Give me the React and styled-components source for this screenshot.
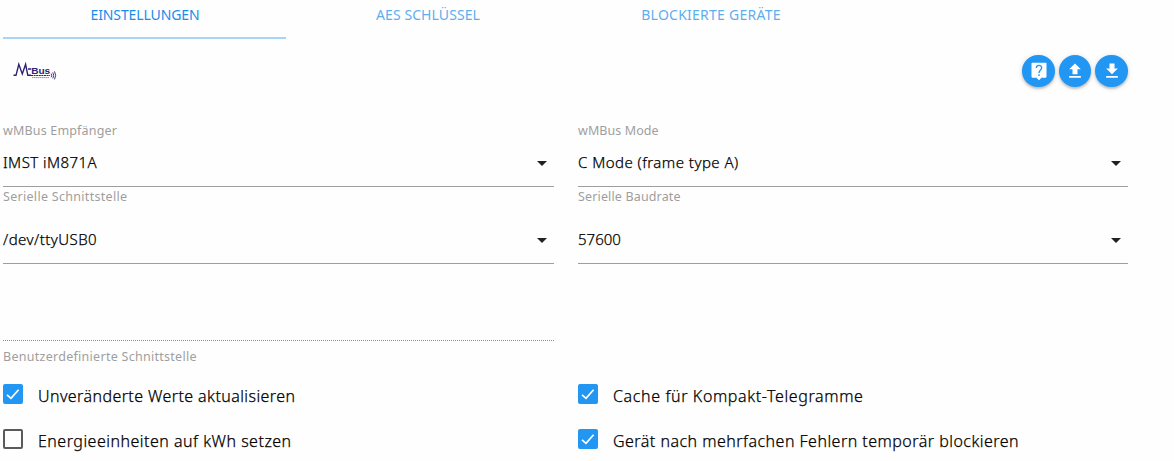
import React from "react";
import styled, { createGlobalStyle } from "styled-components";

const GlobalStyle = createGlobalStyle`
  * {
    box-sizing: border-box;
  }

  body {
    margin: 0;
    overflow: hidden;
    background: #fefefe;
    color: #000;
    font-family: "Noto Sans", "Open Sans", sans-serif;
  }
`;

const Page = styled.main`
  width: 1131px;
  height: 461px;
  padding: 0 3px;
`;

const Tabs = styled.nav`
  display: flex;
  height: 39px;
`;

const Tab = styled.a`
  width: 283px;
  padding: 5px 0 0 1px;
  border-bottom: 2px solid ${(props) => (props.$active ? "#a6d5fa" : "transparent")};
  color: ${(props) => (props.$active ? "#1a8cec" : "#5eaeee")};
  font-size: 14px;
  line-height: 20px;
  letter-spacing: ${(props) => props.$spacing || 0}px;
  text-align: center;
  text-transform: uppercase;
`;

const Header = styled.header`
  display: flex;
  justify-content: space-between;
  align-items: center;
  height: 64px;
  padding-left: 10px;
`;

const Logo = styled.svg`
  display: block;
  width: 44px;
  height: 18px;
`;

const Actions = styled.div`
  display: flex;
  gap: 4px;
`;

const RoundButton = styled.button`
  display: flex;
  align-items: center;
  justify-content: center;
  width: 32.6px;
  height: 32.6px;
  padding: 0;
  border: 0;
  border-radius: 50%;
  background: #2196f3;
  box-shadow: 0 2px 2px rgba(0, 0, 0, 0.16), 0 1px 5px rgba(0, 0, 0, 0.16);

  svg {
    width: 20px;
    height: 20px;
    fill: #fff;
  }
`;

const Columns = styled.div`
  display: grid;
  grid-template-columns: 551px 550px;
  column-gap: 24px;
`;

const Field = styled.div`
  height: ${(props) => props.$height}px;
  display: flex;
  flex-direction: column;
  justify-content: flex-end;
  gap: ${(props) => props.$gap}px;
  border-bottom: 1px solid #9e9e9e;
`;

const Label = styled.label`
  color: #9e9e9e;
  font-size: 12.5px;
  line-height: 18px;
  letter-spacing: ${(props) => props.$spacing || 0}px;
  white-space: nowrap;
`;

const Value = styled.div`
  display: flex;
  align-items: center;
  justify-content: space-between;
  height: 46px;
  padding-right: 7px;
  font-size: 15px;
  font-weight: 300;
  -webkit-text-stroke: 0.25px #000;
  letter-spacing: ${(props) => props.$spacing || 0}px;

  span {
    padding-bottom: 2px;
  }

  svg {
    width: 10px;
    height: 5px;
    fill: #212121;
  }
`;

const CustomPort = styled.div`
  display: flex;
  flex-direction: column;
  width: 551px;
  height: 103px;
  padding-top: 76px;
`;

const DottedLine = styled.div`
  margin-bottom: 7px;
  border-bottom: 1px dotted #8e8e8e;
`;

const Options = styled(Columns)`
  row-gap: 25px;
  padding-top: 17px;
`;

const Option = styled.div`
  display: flex;
  height: 20px;
  gap: 15px;
  font-size: 16px;
  font-weight: 300;
  -webkit-text-stroke: 0.25px #000;
  line-height: 24px;
  letter-spacing: ${(props) => props.$spacing || 0}px;
  white-space: nowrap;
`;

const Box = styled.span`
  width: 20px;
  height: 20px;
  border: 2px solid ${(props) => (props.$checked ? "#2196f3" : "#5a5a5a")};
  border-radius: 2px;
  background: ${(props) => (props.$checked ? "#2196f3" : "transparent")};

  svg {
    display: block;
    width: 16px;
    height: 16px;
    fill: none;
    stroke: #fff;
    stroke-width: 1.7;
  }
`;

const Select = ({ label, value, height, gap, labelSpacing, spacing }) => (
  <Field $height={height} $gap={gap}>
    <Label $spacing={labelSpacing}>{label}</Label>
    <Value $spacing={spacing}>
      <span>{value}</span>
      <svg viewBox="0 0 10 5">
        <path d="M0 0h10L5 5z" />
      </svg>
    </Value>
  </Field>
);

const Check = ({ checked, spacing, children }) => (
  <Option $spacing={spacing}>
    <Box $checked={checked}>
      {checked && (
        <svg viewBox="0 0 16 16">
          <path d="M2 8.8 6 12.4 13.6 3.8" />
        </svg>
      )}
    </Box>
    <span>{children}</span>
  </Option>
);

const MBusLogo = () => (
  <Logo viewBox="0 0 44 18" fill="none" stroke="#2c2175">
    <path d="M.5 13.3H3L5.8 2.3 9.3 12 12.6 2.3 14.8 13.3H18" strokeWidth="1.4" />
    <path d="M15 7h3.2" strokeWidth="1.5" />
    <path d="M18 13.5h19" strokeWidth="1.2" strokeDasharray="2 .6" />
    <path d="M19 15.6h17" strokeWidth="1" strokeOpacity=".5" strokeDasharray="1.6 .4" />
    <path d="M38.2 11.6q1 1.8 0 3.6M39.8 10.4q1.8 3 0 6M41.5 9.4q2.4 4 0 8" strokeWidth=".9" />
    <text
      x="18.2"
      y="11.6"
      fill="#2c2175"
      stroke="none"
      fontFamily="Liberation Sans, sans-serif"
      fontSize="9.5"
      fontWeight="700"
      textLength="19"
      lengthAdjust="spacingAndGlyphs"
    >
      Bus
    </text>
  </Logo>
);

const App = () => (
  <>
    <GlobalStyle />
    <Page>
      <Tabs>
        <Tab $active $spacing={-0.12}>Einstellungen</Tab>
        <Tab $spacing={0.08}>AES Schlüssel</Tab>
        <Tab $spacing={0.25}>Blockierte Geräte</Tab>
      </Tabs>
      <Header>
        <MBusLogo />
        <Actions>
          <RoundButton aria-label="Hilfe">
            <svg viewBox="0 0 24 24">
              <path d="M4 2h16a1 1 0 0 1 1 1v16a1 1 0 0 1-1 1h-5l-3 3-3-3H4a1 1 0 0 1-1-1V3a1 1 0 0 1 1-1z" />
              <path
                d="M8.8 8.4C8.8 4.2 15.2 4.2 15.2 8.2 15.2 10.7 12 11 12 14.4M12 16v2"
                fill="none"
                stroke="#2196f3"
                strokeWidth="1.6"
              />
            </svg>
          </RoundButton>
          <RoundButton aria-label="Hochladen">
            <svg viewBox="0 0 24 24">
              <path d="M9 16h6v-6h4l-7-7-7 7h4zM5 18h14v2H5z" />
            </svg>
          </RoundButton>
          <RoundButton aria-label="Herunterladen">
            <svg viewBox="0 0 24 24">
              <path d="M19 9h-4V3H9v6H5l7 7 7-7zM5 18v2h14v-2H5z" />
            </svg>
          </RoundButton>
        </Actions>
      </Header>
      <Columns>
        <Select label="wMBus Empfänger" value="IMST iM871A" height={84} gap={0} labelSpacing={0.17} spacing={0.44} />
        <Select label="wMBus Mode" value="C Mode (frame type A)" height={84} gap={0} labelSpacing={0.08} spacing={0.46} />
        <Select label="Serielle Schnittstelle" value="/dev/ttyUSB0" height={77} gap={11} labelSpacing={0.3} spacing={0.45} />
        <Select label="Serielle Baudrate" value="57600" height={77} gap={11} labelSpacing={0.15} />
      </Columns>
      <CustomPort>
        <DottedLine />
        <Label $spacing={0.28}>Benutzerdefinierte Schnittstelle</Label>
      </CustomPort>
      <Options>
        <Check checked spacing={0.41}>Unveränderte Werte aktualisieren</Check>
        <Check checked spacing={0.62}>Cache für Kompakt-Telegramme</Check>
        <Check spacing={0.49}>Energieeinheiten auf kWh setzen</Check>
        <Check checked spacing={0.47}>Gerät nach mehrfachen Fehlern temporär blockieren</Check>
      </Options>
    </Page>
  </>
);

export default App;
